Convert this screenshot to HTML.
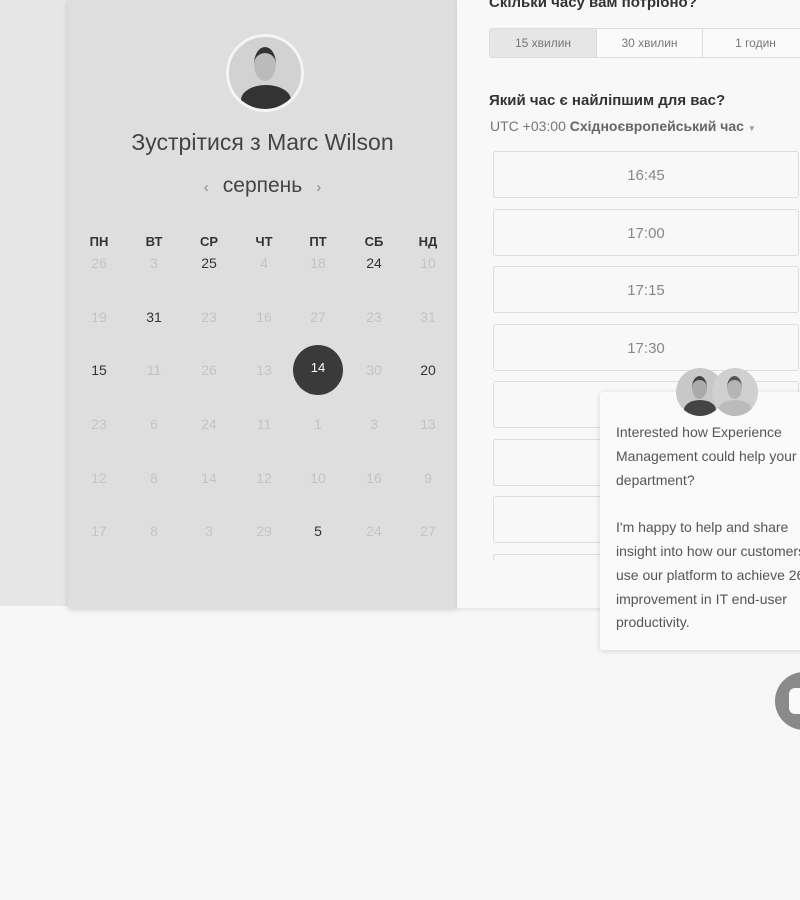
<!DOCTYPE html>
<html><head><meta charset="utf-8"><style>
body{margin:0;width:800px;height:900px;background:#f7f7f7;position:relative;overflow:hidden;font-family:"Liberation Sans",sans-serif}
.abs{position:absolute}
#bgl{left:0;top:0;width:68px;height:606px;background:#e6e6e6}
#lp{left:68px;top:0;width:389px;height:608px;background:#dedede;box-shadow:0 2px 6px rgba(0,0,0,.15)}
#rp{left:457px;top:0;width:343px;height:608px;background:#f8f8f8;box-shadow:0 2px 4px rgba(0,0,0,.08)}
.d{position:absolute;width:40px;margin-left:-20px;text-align:center;font-size:14px;color:#c4c4c4}
.b{color:#333}
.h{font-weight:bold;color:#333;font-size:13px}
.slot{position:absolute;left:493px;width:306px;height:47px;border:1px solid #ddd;border-radius:3px;background:#f8f8f8;text-align:center;line-height:47px;font-size:15px;color:#888;box-sizing:border-box}
.av{position:absolute;border-radius:50%;overflow:hidden}
.av .hd{position:absolute;border-radius:50%}
.av .bd{position:absolute;border-radius:50% 50% 0 0}
</style></head><body>
<div class="abs" id="bgl"></div>
<div class="abs" id="lp"></div>
<div class="abs" id="rp"></div>
<div class="av" style="left:226px;top:34px;width:72px;height:72px;border:3px solid #f4f4f4;background:#d2d2d2">
<div class="hd" style="left:25px;top:10px;width:22px;height:28px;background:#bbb;border-top:6px solid #333"></div>
<div class="bd" style="left:12px;top:48px;width:50px;height:30px;background:#333"></div></div>
<div class="abs" style="left:68px;top:129px;width:389px;text-align:center;font-size:23px;color:#444">Зустрітися з Marc Wilson</div>
<div class="abs" style="left:68px;top:174px;width:389px;text-align:center;font-size:21px;color:#444"><span style="font-size:15px;color:#888;margin-right:14px">‹</span>серпень<span style="font-size:15px;color:#888;margin-left:14px">›</span></div>
<div class="abs" style="left:293px;top:345px;width:50px;height:50px;border-radius:50%;background:#3a3a3a"></div>
<div id="cal"></div>
<div class="abs" style="left:489px;top:-6px;font-size:15px;font-weight:bold;color:#333">Скільки часу вам потрібно?</div>
<div class="abs" style="left:489px;top:28px;width:320px;height:30px;border:1px solid #ddd;border-radius:3px;display:flex;font-size:12px;color:#777;box-sizing:border-box;background:#fafafa">
<div style="width:107px;text-align:center;line-height:28px;background:#e6e6e6;border-right:1px solid #ddd">15 хвилин</div>
<div style="width:106px;text-align:center;line-height:28px;border-right:1px solid #ddd">30 хвилин</div>
<div style="width:106px;text-align:center;line-height:28px">1 годин</div></div>
<div class="abs" style="left:489px;top:92px;font-size:15px;font-weight:bold;color:#333">Який час є найліпшим для вас?</div>
<div class="abs" style="left:490px;top:118px;font-size:14px;color:#777">UTC +03:00 <b style="color:#666">Східноєвропейський час</b> <span style="font-size:8px;color:#999">▼</span></div>
<div class="slot" style="top:151px">16:45</div>
<div class="slot" style="top:209px">17:00</div>
<div class="slot" style="top:266px">17:15</div>
<div class="slot" style="top:324px">17:30</div>
<div class="slot" style="top:381px"></div>
<div class="slot" style="top:439px"></div>
<div class="slot" style="top:496px"></div>
<div style="position:absolute;left:493px;top:554px;width:306px;height:6px;overflow:hidden"><div class="slot" style="left:0;top:0"></div></div>
<div class="abs" style="left:600px;top:392px;width:210px;height:258px;background:#fafafa;box-shadow:0 1px 6px rgba(0,0,0,.15);border-radius:3px"></div>
<div class="av" style="left:676px;top:368px;width:48px;height:48px;background:#c8c8c8">
<div class="hd" style="left:16px;top:8px;width:15px;height:19px;background:#aaa;border-top:4px solid #444"></div>
<div class="bd" style="left:8px;top:32px;width:32px;height:20px;background:#444"></div></div>
<div class="av" style="left:712px;top:368px;width:46px;height:48px;background:#d0d0d0">
<div class="hd" style="left:15px;top:8px;width:15px;height:19px;background:#b5b5b5;border-top:4px solid #555"></div>
<div class="bd" style="left:6px;top:32px;width:34px;height:20px;background:#bbb"></div></div>
<div class="abs" style="left:616px;top:421px;width:200px;font-size:14px;line-height:23.8px;color:#555;white-space:nowrap">Interested how Experience<br>Management could help your IT<br>department?<br><br>I'm happy to help and share<br>insight into how our customers<br>use our platform to achieve 26%<br>improvement in IT end-user<br>productivity.</div>
<div class="abs" style="left:775px;top:672px;width:58px;height:58px;border-radius:50%;background:#8a8a8a"><div style="position:absolute;left:14px;top:16px;width:30px;height:26px;background:#fafafa;border-radius:6px"></div></div>
<script>
var cols=[99,154,209,264,318,374,428],rows=[263,317,370,424,478,531];
var data=[["26","3","25b","4","18","24b","10"],["19","31b","23","16","27","23","31"],["15b","11","26","13","14w","30","20b"],["23","6","24","11","1","3","13"],["12","8","14","12","10","16","9"],["17","8","3","29","5b","24","27"]];
var hd=["ПН","ВТ","СР","ЧТ","ПТ","СБ","НД"],h="";
hd.forEach(function(t,i){h+='<div class="d h" style="left:'+cols[i]+'px;top:234px">'+t+'</div>'});
data.forEach(function(r,ri){r.forEach(function(t,i){var c="";if(t.slice(-1)=="b"){c="b";t=t.slice(0,-1)}var st="";if(t.slice(-1)=="w"){t=t.slice(0,-1);st="color:#fff;font-size:13px;"}
h+='<div class="d '+c+'" style="'+st+'left:'+cols[i]+'px;top:'+(rows[ri]-8-(st?2:0))+'px">'+t+'</div>'})});
document.getElementById("cal").innerHTML=h;
</script>
</body></html>
